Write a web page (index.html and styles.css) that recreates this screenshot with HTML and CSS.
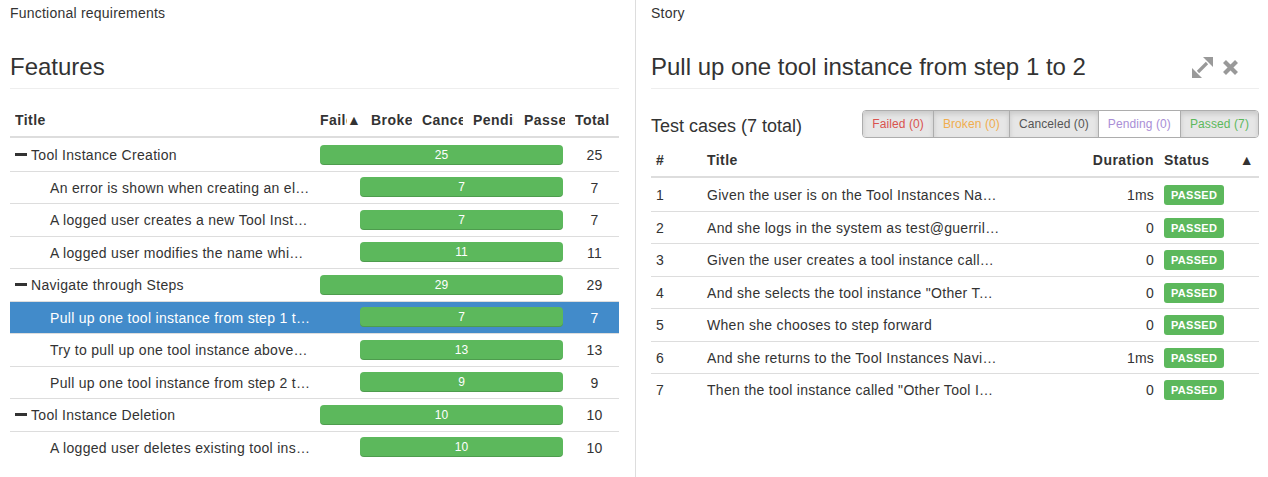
FILE: index.html
```html
<!DOCTYPE html>
<html>
<head>
<meta charset="utf-8">
<link rel="stylesheet" href="styles.css">
</head>
<body>
<div class="page">
  <section class="pane pane-left">
    <div class="pane-caption">Functional requirements</div>
    <div class="title-row"><h2 class="pane-title">Features</h2></div>
    <table class="grid tree">
      <colgroup><col class="c-title"><col class="c-stat"><col class="c-stat"><col class="c-stat"><col class="c-stat"><col class="c-stat"><col class="c-total"></colgroup>
      <thead>
        <tr><th><span class="hc">Title</span></th><th><span class="hc"><span class="clip">Failed</span>▲</span></th><th><span class="hc">Broken</span></th><th><span class="hc">Canceled</span></th><th><span class="hc">Pending</span></th><th><span class="hc">Passed</span></th><th class="center"><span class="hc">Total</span></th></tr>
      </thead>
      <tbody>
        <tr class="group"><td class="name"><span class="minus"></span>Tool Instance Creation</td><td colspan="5" class="bar-cell"><div class="bar">25</div></td><td class="center">25</td></tr>
        <tr class="child"><td class="name">An error is shown when creating an element with an existing name</td><td colspan="5" class="bar-cell"><div class="bar">7</div></td><td class="center">7</td></tr>
        <tr class="child"><td class="name">A logged user creates a new Tool Instance from scratch</td><td colspan="5" class="bar-cell"><div class="bar">7</div></td><td class="center">7</td></tr>
        <tr class="child"><td class="name">A logged user modifies the name which already exists</td><td colspan="5" class="bar-cell"><div class="bar">11</div></td><td class="center">11</td></tr>
        <tr class="group"><td class="name"><span class="minus"></span>Navigate through Steps</td><td colspan="5" class="bar-cell"><div class="bar">29</div></td><td class="center">29</td></tr>
        <tr class="child selected"><td class="name">Pull up one tool instance from step 1 to 2</td><td colspan="5" class="bar-cell"><div class="bar">7</div></td><td class="center">7</td></tr>
        <tr class="child"><td class="name">Try to pull up one tool instance above the first step</td><td colspan="5" class="bar-cell"><div class="bar">13</div></td><td class="center">13</td></tr>
        <tr class="child"><td class="name">Pull up one tool instance from step 2 to 3</td><td colspan="5" class="bar-cell"><div class="bar">9</div></td><td class="center">9</td></tr>
        <tr class="group"><td class="name"><span class="minus"></span>Tool Instance Deletion</td><td colspan="5" class="bar-cell"><div class="bar">10</div></td><td class="center">10</td></tr>
        <tr class="child"><td class="name">A logged user deletes existing tool instance</td><td colspan="5" class="bar-cell"><div class="bar">10</div></td><td class="center">10</td></tr>
      </tbody>
    </table>
  </section>
  <section class="pane pane-right">
    <div class="pane-caption">Story</div>
    <div class="title-row">
      <h2 class="pane-title">Pull up one tool instance from step 1 to 2</h2>
      <div class="actions">
        <svg class="icon-expand" width="23" height="23" viewBox="0 0 23 23"><path d="M7 16 L16 7" stroke="#999" stroke-width="3.2" fill="none"/><polygon points="12,1 22,1 22,11" fill="#999"/><polygon points="1,12 1,22 11,22" fill="#999"/></svg>
        <svg class="icon-close" width="17" height="17" viewBox="0 0 17 17"><path d="M2.5 2.5 L14.5 14.5 M14.5 2.5 L2.5 14.5" stroke="#999" stroke-width="4.2" fill="none"/></svg>
      </div>
    </div>
    <div class="cases-bar">
      <h3 class="cases-title">Test cases (7 total)</h3>
      <div class="btn-group">
        <span class="btn active failed">Failed (0)</span><span class="btn active broken">Broken (0)</span><span class="btn active canceled">Canceled (0)</span><span class="btn pending">Pending (0)</span><span class="btn active passed">Passed (7)</span>
      </div>
    </div>
    <table class="grid cases">
      <colgroup><col class="c-num"><col class="c-ctitle"><col class="c-dur"><col class="c-status"></colgroup>
      <thead>
        <tr><th>#</th><th>Title</th><th class="right">Duration</th><th>Status<span class="sort">▲</span></th></tr>
      </thead>
      <tbody>
        <tr><td>1</td><td class="name">Given the user is on the Tool Instances Navigation page</td><td class="right">1ms</td><td class="status"><span class="label">PASSED</span></td></tr>
        <tr><td>2</td><td class="name">And she logs in the system as test@guerrillamail.com</td><td class="right">0</td><td class="status"><span class="label">PASSED</span></td></tr>
        <tr><td>3</td><td class="name">Given the user creates a tool instance called "Other Tool Instance"</td><td class="right">0</td><td class="status"><span class="label">PASSED</span></td></tr>
        <tr><td>4</td><td class="name">And she selects the tool instance "Other Tool Instance"</td><td class="right">0</td><td class="status"><span class="label">PASSED</span></td></tr>
        <tr><td>5</td><td class="name">When she chooses to step forward</td><td class="right">0</td><td class="status"><span class="label">PASSED</span></td></tr>
        <tr><td>6</td><td class="name">And she returns to the Tool Instances Navigation page</td><td class="right">1ms</td><td class="status"><span class="label">PASSED</span></td></tr>
        <tr><td>7</td><td class="name">Then the tool instance called "Other Tool Instance" is in step 2</td><td class="right">0</td><td class="status"><span class="label">PASSED</span></td></tr>
      </tbody>
    </table>
  </section>
</div>
</body>
</html>
```

FILE: styles.css
```css
* { box-sizing: border-box; }
html, body { margin: 0; padding: 0; background: #fff; }
body {
  font-family: "Liberation Sans", Arial, sans-serif;
  font-size: 14px;
  line-height: 20px;
  color: #333;
  letter-spacing: 0.22px;
}
.page {
  display: flex;
  height: 477px;
  overflow: hidden;
}
.pane { min-width: 0; }
.pane-left {
  width: 636px;
  flex: none;
  padding: 0 16px 0 10px;
  border-right: 1px solid #ddd;
}
.pane-right {
  flex: 1;
  padding: 0 9px 0 15px;
}
.pane-caption {
  margin-top: 3px;
  line-height: 20px;
}
.title-row {
  display: flex;
  align-items: center;
  justify-content: space-between;
  margin-top: 31px;
  padding-bottom: 8px;
  border-bottom: 1px solid #eee;
}
.pane-title {
  margin: 0;
  font-size: 24px;
  line-height: 26px;
  font-weight: normal;
  white-space: nowrap;
  letter-spacing: 0;
}
.actions {
  display: flex;
  align-items: center;
  gap: 8px;
  margin-right: 20px;
  margin-top: 1px;
}
.actions svg { display: block; }

.grid {
  width: 100%;
  border-collapse: collapse;
  table-layout: fixed;
}
.grid th {
  text-align: left;
  font-weight: bold;
  padding: 6px 5px;
  line-height: 20px;
  border-bottom: 2px solid #ddd;
  white-space: nowrap;
  overflow: hidden;
  text-overflow: clip;
  letter-spacing: 0.45px;
}
.hc {
  display: block;
  overflow: hidden;
  white-space: nowrap;
}
.grid td {
  padding: 6px 5px 5.5px;
  line-height: 20px;
  border-top: 1px solid #ddd;
  white-space: nowrap;
  overflow: hidden;
  text-overflow: ellipsis;
  vertical-align: middle;
}
.grid td.name { letter-spacing: 0.3px; }
.grid tbody tr:first-child td { border-top: 0; padding-top: 7px; }
.center { text-align: center; }
.grid .right { text-align: right; }

.tree { margin-top: 15px; }
.tree .c-title { width: 305px; }
.tree .c-stat { width: 51px; }
.tree .c-total { width: 49px; }
.clip {
  display: inline-block;
  width: 27px;
  overflow: hidden;
  vertical-align: top;
}
.tree tr.child td.name { padding-left: 40px; }
.minus {
  display: inline-block;
  width: 12px;
  height: 3px;
  background: #333;
  margin-right: 4px;
  vertical-align: 4px;
}
.tree td.bar-cell { padding: 5px 7px 5px 5px; overflow: visible; }
.bar {
  height: 20px;
  line-height: 20px;
  background: #5cb85c;
  color: #fff;
  font-size: 12px;
  letter-spacing: 0;
  text-align: center;
  border-radius: 4px;
  box-shadow: inset 0 -1px 0 rgba(0,0,0,0.15);
}
.tree tr.child .bar { margin-left: 40px; }
.tree tr.selected td { background: #428bca; color: #fff; }

.cases-bar {
  display: flex;
  align-items: center;
  justify-content: space-between;
  margin-top: 21px;
}
.cases-title {
  margin: 0;
  font-size: 18px;
  line-height: 20px;
  font-weight: normal;
  padding-top: 4px;
  letter-spacing: 0;
}
.btn-group {
  display: flex;
  border: 1px solid #adadad;
  border-radius: 4px;
  overflow: hidden;
}
.btn {
  display: block;
  font-size: 12px;
  line-height: 18px;
  padding: 4px 9px 4px 9px;
  background: #fff;
  border-left: 1px solid #adadad;
  letter-spacing: 0.1px;
}
.btn:first-child { border-left: 0; }
.btn.active {
  background: #e6e6e6;
  box-shadow: inset 0 3px 5px rgba(0,0,0,0.125);
}
.btn.failed { color: #d9534f; }
.btn.broken { color: #f0ad4e; }
.btn.canceled { color: #555; }
.btn.pending { color: #a98ed6; }
.btn.passed { color: #5cb85c; }

.cases { margin-top: 6px; }
.cases .c-num { width: 51px; }
.cases .c-ctitle { width: 303px; }
.cases .c-dur { width: 154px; }
.cases .c-status { width: 100px; }
.sort { float: right; }
.cases td.status { line-height: 20px; }
.label {
  display: inline-block;
  background: #5cb85c;
  color: #fff;
  font-size: 11px;
  font-weight: bold;
  line-height: 14px;
  height: 20px;
  padding: 3px 7px;
  border-radius: 3px;
  vertical-align: top;
  letter-spacing: 0.3px;
}
```
